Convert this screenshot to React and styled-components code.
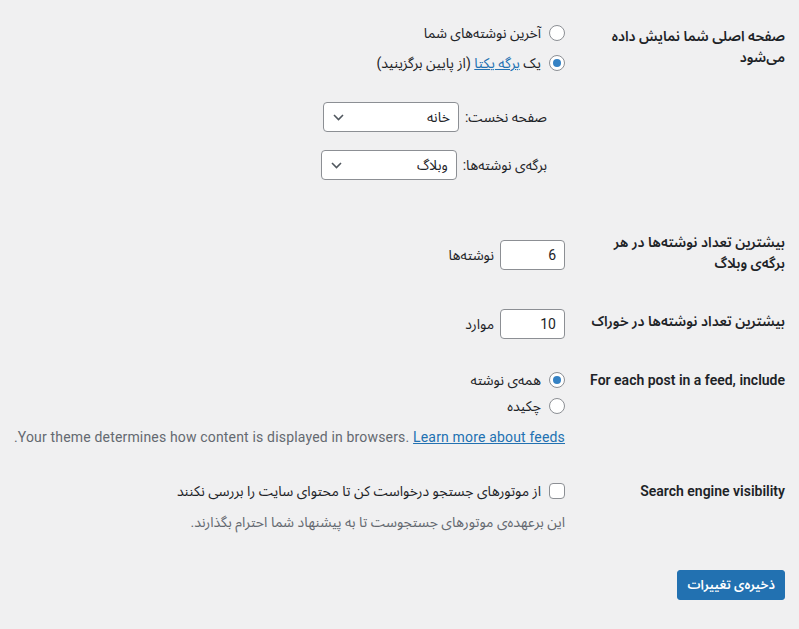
import React from "react";
import styled, { createGlobalStyle } from "styled-components";

const GlobalStyle = createGlobalStyle`
  html, body { margin: 0; padding: 0; background: #f0f0f1; }
  body {
    font-family: Roboto, "Noto Sans Arabic", "DejaVu Sans", sans-serif;
    font-size: 14px;
    color: #1d2327;
  }
  * { box-sizing: border-box; }
`;

const Page = styled.form`
  direction: rtl;
  padding: 0 14px 0 10px;
`;

const Row = styled.div`
  display: grid;
  grid-template-columns: 220px 1fr;
  align-items: start;
`;

const Th = styled.div`
  font-weight: 600;
  line-height: 21px;
  padding-left: 20px;
  padding-top: ${(p) => p.$top}px;
`;

const Td = styled.div`
  padding-top: ${(p) => p.$top}px;
`;

const Choice = styled.label`
  display: flex;
  align-items: center;
  gap: 8px;
  height: ${(p) => p.$h || 26}px;
  line-height: 21px;
`;

const Radio = styled.input.attrs({ type: "radio" })`
  appearance: none;
  margin: 0;
  width: 16px;
  height: 16px;
  border: 1px solid #8c8f94;
  border-radius: 50%;
  background: #fff;
  display: grid;
  place-items: center;
  flex: none;
  &:checked::before {
    content: "";
    width: 8px;
    height: 8px;
    border-radius: 50%;
    background: #3582c4;
  }
`;

const Checkbox = styled.input.attrs({ type: "checkbox" })`
  appearance: none;
  margin: 0;
  width: 16px;
  height: 16px;
  border: 1px solid #8c8f94;
  border-radius: 4px;
  background: #fff;
  flex: none;
`;

const Link = styled.a`
  color: #2271b1;
  text-decoration: underline;
`;

const SubList = styled.div`
  display: flex;
  flex-direction: column;
  gap: 18px;
  margin-top: 24px;
  padding-right: 18px;
`;

const SubItem = styled.label`
  display: flex;
  align-items: center;
  gap: 6px;
`;

const SelectBox = styled.div`
  position: relative;
  width: 136px;
  height: 30px;
  border: 1px solid #8c8f94;
  border-radius: 4px;
  background: #fff;
  display: flex;
  align-items: center;
  padding: 0 8px 0 24px;
  font-size: 14px;
  svg {
    position: absolute;
    left: 9px;
    top: 11px;
  }
`;

const NumberRow = styled.label`
  display: flex;
  align-items: center;
  gap: 6px;
`;

const NumberInput = styled.div`
  width: 65px;
  height: 30px;
  border: 1px solid #8c8f94;
  border-radius: 4px;
  background: #fff;
  display: flex;
  align-items: center;
  padding: 0 8px;
  font-size: 14px;
`;

const Description = styled.p`
  margin: ${(p) => p.$mt}px 0 0;
  color: #646970;
  line-height: 21px;
  letter-spacing: ${(p) => p.$ls || 0}px;
`;

const Submit = styled.div`
  margin-top: 37px;
`;

const Button = styled.button`
  height: 30px;
  padding: 0 9px;
  background: #2271b1;
  border: 1px solid #2271b1;
  border-radius: 3px;
  color: #fff;
  font-family: inherit;
  font-size: 13px;
  font-weight: 600;
  direction: rtl;
`;

const Chevron = () => (
  <svg width="11" height="7" viewBox="0 0 11 7" fill="none">
    <path d="M1 1l4.5 4.5L10 1" stroke="#50575e" strokeWidth="1.6" />
  </svg>
);

export default function App() {
  return (
    <>
      <GlobalStyle />
      <Page>
        <Row>
          <Th $top={26}>صفحه اصلی شما نمایش داده می‌شود</Th>
          <Td $top={18}>
            <Choice $h={30}>
              <Radio name="front" />
              آخرین نوشته‌های شما
            </Choice>
            <Choice $h={30}>
              <Radio name="front" defaultChecked />
              <span>
                یک <Link href="#">برگه یکتا</Link> (از پایین برگزینید)
              </span>
            </Choice>
            <SubList>
              <SubItem>
                صفحه نخست:
                <SelectBox>
                  خانه
                  <Chevron />
                </SelectBox>
              </SubItem>
              <SubItem>
                برگه‌ی نوشته‌ها:
                <SelectBox>
                  وبلاگ
                  <Chevron />
                </SelectBox>
              </SubItem>
            </SubList>
          </Td>
        </Row>

        <Row>
          <Th $top={52}>بیشترین تعداد نوشته‌ها در هر برگه‌ی وبلاگ</Th>
          <Td $top={60}>
            <NumberRow>
              <NumberInput>6</NumberInput>
              نوشته‌ها
            </NumberRow>
          </Td>
        </Row>

        <Row>
          <Th $top={37}>بیشترین تعداد نوشته‌ها در خوراک</Th>
          <Td $top={35}>
            <NumberRow>
              <NumberInput>10</NumberInput>
              موارد
            </NumberRow>
          </Td>
        </Row>

        <Row>
          <Th $top={31}>For each post in a feed, include</Th>
          <Td $top={28}>
            <Choice>
              <Radio name="feed" defaultChecked />
              همه‌ی نوشته
            </Choice>
            <Choice>
              <Radio name="feed" />
              چکیده
            </Choice>
            <Description $mt={8} $ls={0.17}>
              Your theme determines how content is displayed in browsers.{" "}
              <Link href="#">Learn more about feeds</Link>.
            </Description>
          </Td>
        </Row>

        <Row>
          <Th $top={33}>Search engine visibility</Th>
          <Td $top={30}>
            <Choice>
              <Checkbox />
              از موتورهای جستجو درخواست کن تا محتوای سایت را بررسی نکنند
            </Choice>
            <Description $mt={8}>
              این برعهده‌ی موتورهای جستجوست تا به پیشنهاد شما احترام بگذارند.
            </Description>
          </Td>
        </Row>

        <Submit>
          <Button type="button">ذخیره‌ی تغییرات</Button>
        </Submit>
      </Page>
    </>
  );
}
